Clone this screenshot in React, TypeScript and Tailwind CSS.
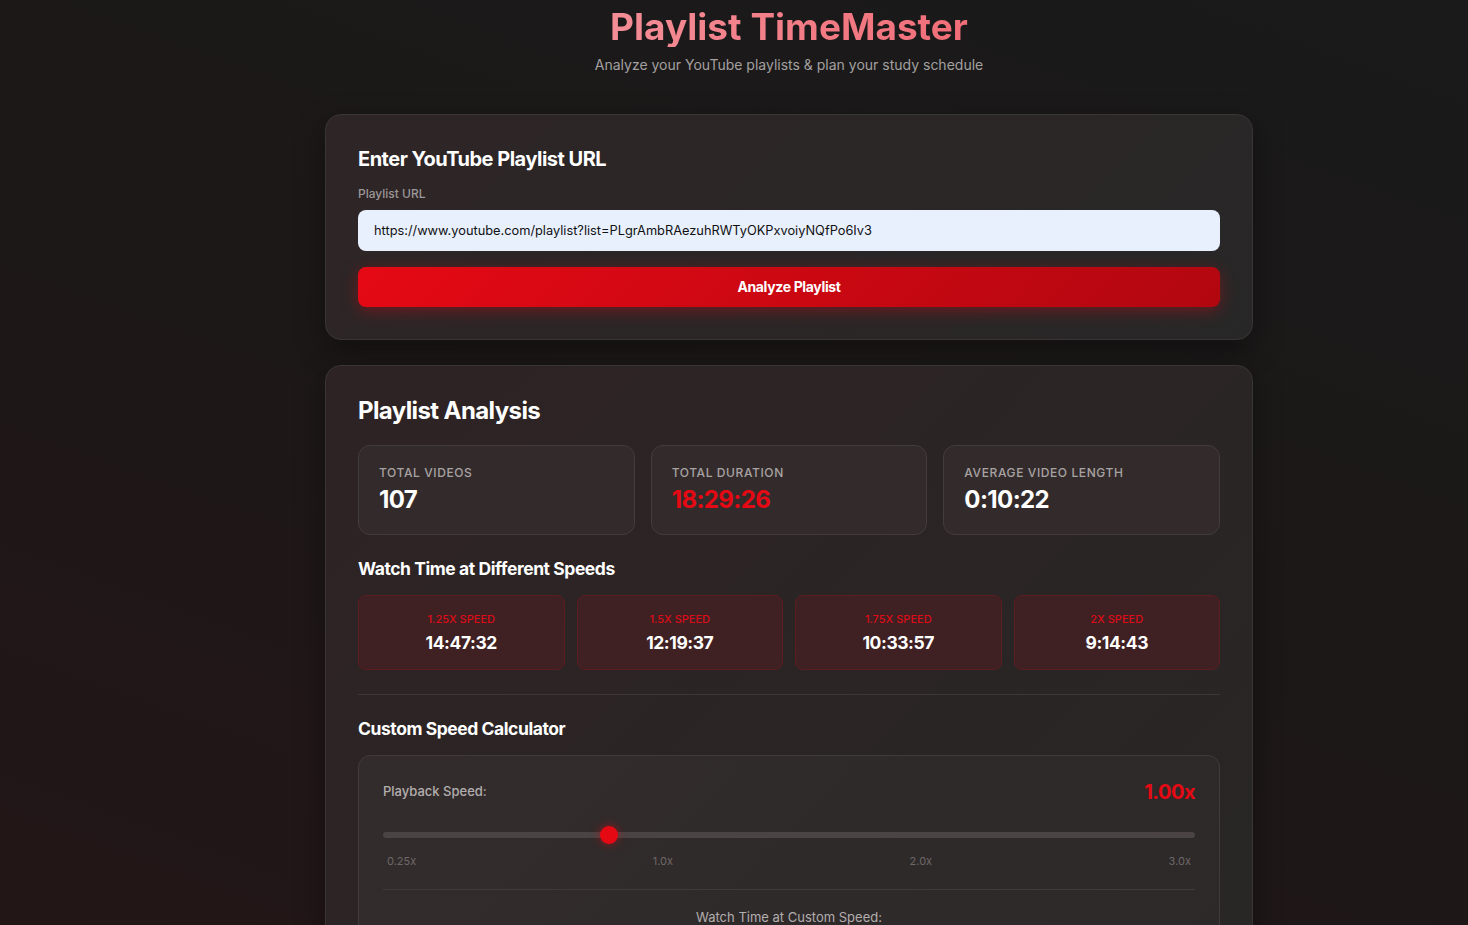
import { useState } from 'react';

const SPEEDS = [
  { label: '1.25x Speed', time: '14:47:32' },
  { label: '1.5x Speed', time: '12:19:37' },
  { label: '1.75x Speed', time: '10:33:57' },
  { label: '2x Speed', time: '9:14:43' },
];

const STATS = [
  { label: 'Total Videos', value: '107', accent: false },
  { label: 'Total Duration', value: '18:29:26', accent: true },
  { label: 'Average Video Length', value: '0:10:22', accent: false },
];

export default function App() {
  const [url] = useState('https://www.youtube.com/playlist?list=PLgrAmbRAezuhRWTyOKPxvoiyNQfPo6Iv3');
  const speed = 1.0;
  const pct = (speed - 0.25) / (3 - 0.25);

  return (
    <div className="h-[925px] w-full overflow-hidden bg-[linear-gradient(200deg,#1a1a1a_0%,#1c1818_45%,#231617_100%)] font-['Inter','Noto_Sans',sans-serif] text-white">
      <div className="mx-auto w-[1578px] pt-[7px]">
        <div className="mx-auto w-[928px]">
          <header className="mb-[39px] text-center">
            <h1 className="bg-[linear-gradient(90deg,#f6a6ae,#ee5560)] bg-clip-text text-[37px] font-bold leading-10 text-transparent">
              Playlist TimeMaster
            </h1>
            <p className="mt-2 text-sm leading-5 text-[#a3a0a0]">
              Analyze your YouTube playlists &amp; plan your study schedule
            </p>
          </header>

          <section className="rounded-2xl border border-[#3a3535] bg-[linear-gradient(135deg,#2e2526,#282727)] p-8 shadow-[0_10px_30px_rgba(0,0,0,0.35)]">
            <h2 className="mb-[15px] text-xl font-bold leading-6 tracking-tight">Enter YouTube Playlist URL</h2>
            <label className="mb-2 block text-xs font-medium leading-4 text-[#9c9797]">Playlist URL</label>
            <input
              readOnly
              value={url}
              className="mb-4 block h-[41px] w-full rounded-lg bg-[#e8f0fe] px-4 text-[12.8px] text-[#111] outline-none"
            />
            <button className="block h-10 w-full rounded-lg bg-[linear-gradient(135deg,#e50914,#b20710)] text-sm font-bold tracking-tight text-white shadow-[0_4px_16px_rgba(229,9,20,0.35)]">
              Analyze Playlist
            </button>
          </section>

          <section className="mt-[25px] rounded-2xl border border-[#3a3535] bg-[linear-gradient(135deg,#2e2324,#282626)] p-8 shadow-[0_10px_30px_rgba(0,0,0,0.35)]">
            <h2 className="mb-[21px] text-2xl font-bold leading-[26px] tracking-tight">Playlist Analysis</h2>

            <div className="grid grid-cols-3 gap-4">
              {STATS.map((s) => (
                <div key={s.label} className="rounded-xl border border-[#433c3c] bg-[#332b2b] px-5 pb-[18px] pt-[19px]">
                  <div className="text-xs font-medium uppercase leading-4 tracking-wider text-[#a8a3a3]">{s.label}</div>
                  <div className={`mt-[3px] text-2xl font-bold leading-8 tracking-tight ${s.accent ? 'text-[#e50914]' : 'text-white'}`}>
                    {s.value}
                  </div>
                </div>
              ))}
            </div>

            <h3 className="mb-3 mt-5 text-[17.5px] font-bold leading-7 tracking-tight">Watch Time at Different Speeds</h3>
            <div className="grid grid-cols-4 gap-3">
              {SPEEDS.map((s) => (
                <div key={s.label} className="rounded-lg border border-[#5a1d20] bg-[#3f2123] pb-[14px] pt-[15px] text-center">
                  <div className="text-[11px] font-medium uppercase leading-4 text-[#dc0c18]">{s.label}</div>
                  <div className="mt-1 text-[17.5px] font-bold leading-6 tracking-tight">{s.time}</div>
                </div>
              ))}
            </div>

            <div className="mt-6 border-t border-[#3d3737] pt-5">
              <h3 className="mb-3 text-[17.5px] font-bold leading-7 tracking-tight">Custom Speed Calculator</h3>
              <div className="rounded-xl border border-[#403a3a] bg-[linear-gradient(135deg,#332c2c,#2c2929)] px-6 pb-6 pt-[22px]">
                <div className="mb-[19px] flex items-center justify-between">
                  <span className="text-[13px] font-medium text-[#b3aeae]">Playback Speed:</span>
                  <span className="text-xl font-bold leading-7 tracking-tight text-[#e50914]">1.00x</span>
                </div>
                <div className="relative h-5">
                  <div className="absolute left-0 right-0 top-[7px] h-1.5 rounded-full bg-[#4a4444]" />
                  <div
                    className="absolute top-[1px] h-[18px] w-[18px] rounded-full bg-[#e50914] shadow-[0_0_10px_rgba(229,9,20,0.6)]"
                    style={{ left: `calc(${pct} * (100% - 18px))` }}
                  />
                </div>
                <div className="mt-2 flex justify-between px-1 text-[11px] leading-4 text-[#6e6868]">
                  <span>0.25x</span>
                  <span>1.0x</span>
                  <span>2.0x</span>
                  <span>3.0x</span>
                </div>
                <div className="mt-5 border-t border-[#403a3a] pt-[17px] text-center text-[13px] leading-5 text-[#b3aeae]">
                  Watch Time at Custom Speed:
                </div>
              </div>
            </div>
          </section>
        </div>
      </div>
    </div>
  );
}
